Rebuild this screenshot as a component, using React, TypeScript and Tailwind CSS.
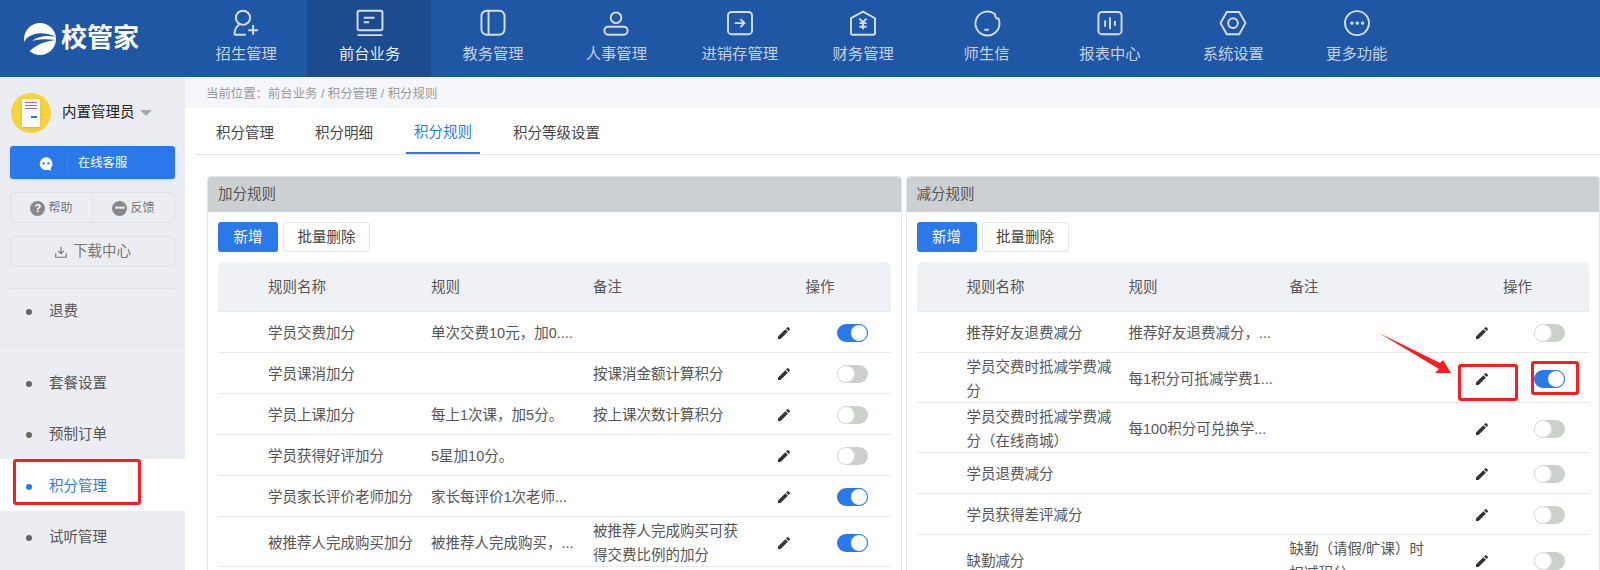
import type { ReactNode } from "react";

const font = "font-['Liberation_Sans','Noto_Sans_CJK_SC',sans-serif]";

const navIcons: Record<string, ReactNode> = {
  招生管理: (
    <>
      <circle cx="14.600" cy="11" r="8" />
      <path d="M5 30c0-7 2.500-9.500 5.500-11.500M5 30h13M26 19v11M20.500 25h11" />
    </>
  ),
  前台业务: (
    <>
      <rect x="4" y="3" width="28" height="22" rx="2" />
      <path d="M11 11h12M11 16h6M4 30.500h28" />
    </>
  ),
  教务管理: (
    <>
      <rect x="5" y="3" width="26" height="27" rx="6" />
      <path d="M13 3v27" />
    </>
  ),
  人事管理: (
    <>
      <circle cx="18" cy="11" r="6" />
      <rect x="5" y="21" width="26" height="9" rx="4" />
    </>
  ),
  进销存管理: (
    <>
      <rect x="4.500" y="4.500" width="27" height="25" rx="4" />
      <path d="M12 17h11M18.500 12.500 23 17l-4.500 4.500" />
    </>
  ),
  财务管理: (
    <>
      <path d="M4.500 11.500 18 4l13.500 7.500V28a2 2 0 0 1-2 2h-23a2 2 0 0 1-2-2z" />
      <path d="m14 12 4 4 4-4M18 16v8M14 17h8M14 21h8" />
    </>
  ),
  师生信: (
    <>
      <path d="M27 7a13.500 13.500 0 1 0 5 10c0-2-.5-4-1-5-2 .5-4-1-4-5z" />
      <path d="M15 24.500h5" />
    </>
  ),
  报表中心: (
    <>
      <rect x="5" y="4.500" width="26" height="25" rx="4" />
      <path d="M12.500 14v7M18 10.500v13M23.500 14.500v5.500" />
    </>
  ),
  系统设置: (
    <>
      <path d="M11 4.500h14l7 12.500-7 12.500H11L4 17z" />
      <circle cx="18" cy="17" r="5.500" />
    </>
  ),
  更多功能: (
    <>
      <circle cx="18" cy="17" r="13.500" />
      <path d="M12 17h.5M18 17h.5M24 17h.5" strokeWidth="3.500" strokeLinecap="round" />
    </>
  ),
};

const navItems = Object.keys(navIcons);

type Row = {
  name: string;
  rule?: string;
  note?: string;
  on?: boolean;
  height: string;
};

const addRows: Row[] = [
  { name: "学员交费加分", rule: "单次交费10元，加0....", on: true, height: "h-[41px]" },
  { name: "学员课消加分", note: "按课消金额计算积分", height: "h-[41px]" },
  { name: "学员上课加分", rule: "每上1次课，加5分。", note: "按上课次数计算积分", height: "h-[41px]" },
  { name: "学员获得好评加分", rule: "5星加10分。", height: "h-[41px]" },
  { name: "学员家长评价老师加分", rule: "家长每评价1次老师...", on: true, height: "h-[41px]" },
  {
    name: "被推荐人完成购买加分",
    rule: "被推荐人完成购买，...",
    note: "被推荐人完成购买可获得交费比例的加分",
    on: true,
    height: "h-[50px]",
  },
];

const subRows: Row[] = [
  { name: "推荐好友退费减分", rule: "推荐好友退费减分，...", height: "h-[41px]" },
  { name: "学员交费时抵减学费减分", rule: "每1积分可抵减学费1...", on: true, height: "h-[50px]" },
  { name: "学员交费时抵减学费减分（在线商城）", rule: "每100积分可兑换学...", height: "h-[50px]" },
  { name: "学员退费减分", height: "h-[41px]" },
  { name: "学员获得差评减分", height: "h-[41px]" },
  { name: "缺勤减分", note: "缺勤（请假/旷课）时扣减积分", height: "h-[50px]" },
];

function Pencil() {
  return (
    <svg viewBox="0 0 24 24" className="h-[16px] w-[16px] fill-[#333]">
      <path d="M3 17.250V21h3.750L17.810 9.940l-3.750-3.750zM20.710 7.040a1 1 0 0 0 0-1.410l-2.340-2.340a1 1 0 0 0-1.410 0l-1.830 1.830 3.750 3.750z" />
    </svg>
  );
}

function Toggle({ on }: { on?: boolean }) {
  return (
    <div
      className={
        on
          ? "flex h-[18px] w-[31px] items-center justify-end rounded-full bg-[#2b79e8]"
          : "flex h-[18px] w-[31px] items-center justify-start rounded-full bg-[#ccd0cd]"
      }
    >
      <div
        className={
          on
            ? "h-[18px] w-[18px] rounded-full border border-[#2b79e8] bg-white"
            : "h-[18px] w-[18px] rounded-full border border-[#ddd] bg-white"
        }
      />
    </div>
  );
}

function RuleTable({ title, rows, columns }: { title: string; rows: Row[]; columns: string }) {
  return (
    <section className="min-w-0 flex-1 overflow-hidden rounded-t-[4px] border border-b-0 border-[#e3e5e8] bg-white">
      <div className="flex h-[35px] items-center bg-[#ccd0d3] px-[10px] text-[14.500px] text-[#555]">{title}</div>
      <div className="flex gap-[5px] px-[10px] pt-[10px]">
        <button className="h-[30px] w-[60px] rounded-[3px] bg-[#2b79e8] pt-[2px] text-[14.500px] text-white">新增</button>
        <button className="h-[30px] w-[87px] rounded-[3px] border border-[#e1e4e8] bg-white pt-[2px] text-[14.500px] text-[#444]">
          批量删除
        </button>
      </div>
      <div className="px-[10px] pt-[10px]">
        <div className={`grid h-[50px] items-center rounded-t-[6px] border-b border-[#e5e7ea] bg-[#f0f1f5] pt-[2px] text-[14.500px] text-[#555] ${columns}`}>
          <div className="pl-[50px]">规则名称</div>
          <div>规则</div>
          <div>备注</div>
          <div className="col-span-2 text-center">操作</div>
        </div>
        {rows.map((row) => (
          <div
            key={row.name}
            className={`grid items-center border-b border-[#e8e9ec] pt-[2px] text-[14.500px] leading-[24px] text-[#555] ${columns} ${row.height}`}
          >
            <div className="pl-[50px] pr-[8px]">{row.name}</div>
            <div className="whitespace-nowrap">{row.rule}</div>
            <div className="pr-[10px]">{row.note}</div>
            <div className="flex justify-center">
              <Pencil />
            </div>
            <div className="flex justify-center pr-[6px]">
              <Toggle on={row.on} />
            </div>
          </div>
        ))}
      </div>
    </section>
  );
}

function NavBar() {
  return (
    <header className="flex h-[77px] shrink-0 bg-[#1f57a4]">
      <div className="flex w-[184px] shrink-0 items-center gap-[5px] pl-[24px]">
        <svg viewBox="0 0 32 32" className="h-[32px] w-[32px]">
          <circle cx="16" cy="16" r="16" fill="#fff" />
          <path d="M0 19C6 9 20 8 32 14 24 12 14 13 8 18c6-2 16-2 24-1-10 1-20 4-27 12-3-3-5-6-5-10z" fill="#1f57a4" />
        </svg>
        <span className="text-[26px] font-bold text-white">校管家</span>
      </div>
      <nav className="flex">
        {navItems.map((item) => (
          <div
            key={item}
            className={
              item === "前台业务"
                ? "flex w-[123.400px] flex-col items-center bg-[#1c4b8e] pl-[1px] pt-[8px] text-[15.300px] text-[#e8edf5]"
                : "flex w-[123.400px] flex-col items-center pl-[1px] pt-[8px] text-[15.300px] text-[#c5d2e6]"
            }
          >
            <svg
              viewBox="0 0 36 36"
              className="h-[32px] w-[32px] fill-none stroke-[#d3deee] stroke-[2.200]"
            >
              {navIcons[item]}
            </svg>
            <span className="mt-[4px] leading-[20px]">{item}</span>
          </div>
        ))}
      </nav>
    </header>
  );
}

function SideItem({ label, active, short }: { label: string; active?: boolean; short?: boolean }) {
  return (
    <div
      className={
        active
          ? "flex h-[52px] items-center gap-[17px] bg-white pl-[26px] pt-[4px] text-[14.500px] text-[#2b79e8]"
          : short
            ? "flex h-[46px] items-center gap-[17px] pl-[26px] text-[14.500px] text-[#555]"
            : "flex h-[51px] items-center gap-[17px] pl-[26px] pt-[3px] text-[14.500px] text-[#555]"
      }
    >
      <span className={active ? "h-[6px] w-[6px] rounded-full bg-[#2b79e8]" : "h-[6px] w-[6px] rounded-full bg-[#666]"} />
      {label}
    </div>
  );
}

function SideBar() {
  return (
    <aside className="w-[185px] shrink-0 bg-[#ebedf2]">
      <div className="flex items-center gap-[11px] px-[11px] pt-[16px]">
        <div className="flex h-[40px] w-[40px] items-center justify-center rounded-full bg-[#f6d33f]">
          <div className="flex h-[28px] w-[18px] flex-col gap-[2px] bg-white p-[3px] shadow-sm">
            <span className="h-[1px] bg-[#c45a9a]" />
            <span className="h-[1px] bg-[#c45a9a]" />
            <span className="h-[1px] bg-[#c45a9a]" />
            <span className="ml-auto mt-[5px] h-[2px] w-[6px] bg-[#2b79e8]" />
          </div>
        </div>
        <span className="text-[14.500px] text-[#222]">内置管理员</span>
        <span className="-ml-[6px] h-0 w-0 border-x-[6px] border-t-[6px] border-x-transparent border-t-[#aaa]" />
      </div>
      <div className="mx-[10px] mt-[13px] flex h-[33px] items-center rounded-[3px] bg-[#2b79e8] pt-[2px] text-[12.300px] text-white shadow-sm">
        <div className="flex w-[58px] justify-end border-r border-[#3f86eb] pr-[13px]">
          <svg viewBox="0 0 24 24" className="h-[16px] w-[16px] fill-white">
            <path d="M12 2a9.500 9.500 0 0 0 0 19h5l2 2v-5a9.500 9.500 0 0 0-7-16z" />
            <circle cx="8.500" cy="11" r="1.800" fill="#2b79e8" />
            <circle cx="15.500" cy="11" r="1.800" fill="#2b79e8" />
          </svg>
        </div>
        <span className="ml-[10px]">在线客服</span>
      </div>
      <div className="mx-[10px] mt-[13px] flex h-[31px] rounded-[4px] border border-[#dfe1e6] pt-[1px] text-[12px] text-[#777]">
        <div className="flex flex-1 items-center justify-center gap-[3px] border-r border-[#dfe1e6]">
          <span className="flex h-[15px] w-[15px] items-center justify-center rounded-full bg-[#888] text-[11px] font-bold text-white">?</span>
          帮助
        </div>
        <div className="flex flex-1 items-center justify-center gap-[3px]">
          <span className="flex h-[15px] w-[15px] items-center justify-center rounded-full bg-[#888] text-[9px] font-bold leading-[10px] text-white">•••</span>
          反馈
        </div>
      </div>
      <div className="mx-[10px] mt-[13px] flex h-[31px] items-center justify-center gap-[5px] rounded-[4px] border border-[#dfe1e6] pt-[1px] text-[14.500px] text-[#777]">
        <svg viewBox="0 0 24 24" className="h-[14px] w-[14px] fill-none stroke-[#777] stroke-2">
          <path d="M12 3v12M7 10l5 5 5-5M3 14v7h18v-7" />
        </svg>
        下载中心
      </div>
      <div className="mx-[10px] mt-[21px] border-t border-[#dfe1e6]" />
      <div className="border-b border-[#e2e4e8] pb-[10px]">
        <SideItem label="退费" short />
      </div>
      <div className="pt-[11px]">
        <SideItem label="套餐设置" />
        <SideItem label="预制订单" />
        <SideItem label="积分管理" active />
        <SideItem label="试听管理" />
      </div>
    </aside>
  );
}

export default function App() {
  return (
    <div className={`relative flex h-[570px] w-[1600px] flex-col overflow-hidden bg-white ${font}`}>
      <NavBar />
      <div className="flex min-h-0 flex-1">
        <SideBar />
        <main className="min-w-0 flex-1">
          <div className="flex h-[31px] items-center bg-[#f5f6fa] pl-[21px] pt-[3px] text-[12.400px] text-[#999]">
            当前位置：前台业务 / 积分管理 / 积分规则
          </div>
          <div className="ml-[10px] flex h-[47px] gap-[41px] border-b border-[#e3e5e8] pl-[21px] text-[14.500px] text-[#444]">
            <div className="flex items-center pt-[6px]">积分管理</div>
            <div className="flex items-center pt-[6px]">积分明细</div>
            <div className="-mx-[8px] flex items-center border-b-2 border-[#2b79e8] px-[8px] pt-[6px] text-[#2b79e8]">积分规则</div>
            <div className="flex items-center pt-[6px]">积分等级设置</div>
          </div>
          <div className="flex gap-[4px] pl-[22px] pt-[21px]">
            <RuleTable title="加分规则" rows={addRows} columns="grid-cols-[213px_162px_156px_70px_72px]" />
            <RuleTable title="减分规则" rows={subRows} columns="grid-cols-[212px_161px_157px_70px_72px]" />
          </div>
        </main>
      </div>

      {/* annotations drawn over the screenshot */}
      <div className="absolute left-[13px] top-[459px] h-[46px] w-[128px] rounded-[3px] border-[3px] border-[#f51f1f]" />
      <div className="absolute left-[1458px] top-[364px] h-[37px] w-[60px] rounded-[3px] border-[3px] border-[#f51f1f]" />
      <div className="absolute left-[1531px] top-[361px] h-[34px] w-[48px] rounded-[3px] border-[3px] border-[#f51f1f]" />
      <svg viewBox="0 0 80 50" className="absolute left-[1376px] top-[330px] h-[50px] w-[80px]">
        <path d="M3 3 64 33 67 30 75 43 59 43 63 39z" fill="#f51f1f" />
      </svg>
    </div>
  );
}
